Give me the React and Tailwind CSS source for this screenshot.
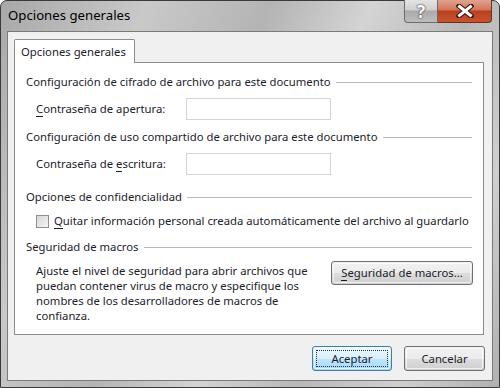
import React from "react";

const font = { fontFamily: '"Noto Sans", "DejaVu Sans", sans-serif' };

function Heading({ children }) {
  return (
    <div className="flex items-center h-[18px] pl-[11px] pr-[11px]">
      <span className="text-[#1c1c2c] whitespace-nowrap">{children}</span>
      <div className="flex-1 ml-[5px] h-px bg-[#b9b9b9] mt-px" />
    </div>
  );
}

function WinButton({ children, className = "", def = false }) {
  return (
    <div
      className={
        "relative flex items-center justify-center rounded-[3px] border " +
        (def ? "border-[#3c7fb1] " : "border-[#707070] ") +
        className
      }
      style={{
        background: def
          ? "linear-gradient(#eaf6fd 0%, #d9f0fc 50%, #bee6fd 50%, #a7d9f5 100%)"
          : "linear-gradient(#f2f2f2 0%, #ebebeb 50%, #dddddd 50%, #cfcfcf 100%)",
      }}
    >
      <div className="absolute inset-px rounded-[2px] border border-[#fcfcfc]/70" />
      {def && <div className="absolute inset-[3px] border border-dotted border-[#333]" />}
      <span className="relative text-[#1c1c2c]">{children}</span>
    </div>
  );
}

export default function App() {
  return (
    <div className="w-[500px] h-[388px] text-[11.3px] leading-none" style={font}>
      <div
        className="w-[500px] h-[388px] flex flex-col rounded-t-[7px] border border-[#3a3a3a] px-[6px] pb-[6px] relative"
        style={{
          background:
            "linear-gradient(115deg, #a8a8a8 0%, #c9c9c9 22%, #b4b4b4 40%, #d4d4d4 55%, #b8b8b8 70%, #cfcfcf 85%, #b0b0b0 100%)",
        }}
      >
        {/* title bar */}
        <div className="h-[30px] flex items-start">
          <span className="mt-[8px] ml-[1px] text-[13.2px] text-black whitespace-nowrap">
            Opciones generales
          </span>
          <div className="ml-auto flex mr-[1px] mt-[-1px]">
            <div
              className="w-[34px] h-[23px] rounded-bl-[4px] border border-[#6b6b6b] border-t-0 flex items-center justify-center text-white font-bold text-[17px]"
              style={{
                background: "linear-gradient(#e4e4e4 0%, #cfcfcf 45%, #ababab 50%, #bdbdbd 100%)",
                textShadow: "0 0 1px #333, 0 0 2px #333",
              }}
            >
              ?
            </div>
            <div
              className="w-[54px] h-[23px] rounded-br-[4px] border border-[#6b3020] border-t-0 border-l-0 flex items-center justify-center"
              style={{
                background: "linear-gradient(#e0a38f 0%, #d4755c 45%, #b8401f 50%, #c9532e 100%)",
              }}
            >
              <svg width="18" height="14" viewBox="0 0 18 14">
                <path d="M3 2 L15 12 M15 2 L3 12" stroke="#3a1208" strokeWidth="5" strokeLinecap="square" fill="none" />
                <path d="M3.5 2.5 L14.5 11.5 M14.5 2.5 L3.5 11.5" stroke="#ffffff" strokeWidth="3" strokeLinecap="square" fill="none" />
              </svg>
            </div>
          </div>
        </div>

        {/* client area */}
        <div className="flex-1 bg-[#f0f0f0] border border-[#7a7a7a] flex flex-col px-[6px] pt-[7px]">
          {/* tab */}
          <div className="flex">
            <div className="w-[121px] h-[24px] bg-white border border-b-0 border-[#898c95] flex items-center pl-[6px] relative z-10 -mb-px rounded-t-[2px]">
              <span className="text-[#1c1c2c] whitespace-nowrap">Opciones generales</span>
            </div>
          </div>
          <div className="w-[470px] h-[273px] bg-white border border-[#898c95] flex flex-col pt-[10px]">
            <Heading>Configuración de cifrado de archivo para este documento</Heading>
            <div className="flex items-center h-[22px] mt-[7px] pl-[21px]">
              <span className="w-[150px] text-[#1c1c2c] whitespace-nowrap">
                <span className="border-b border-[#1c1c2c]">C</span>ontraseña de apertura:
              </span>
              <div className="w-[145px] h-[22px] border border-[#d5d5d5] bg-white" />
            </div>
            <div className="h-[8px]" />
            <Heading>Configuración de uso compartido de archivo para este documento</Heading>
            <div className="flex items-center h-[22px] mt-[7px] pl-[21px]">
              <span className="w-[150px] text-[#1c1c2c] whitespace-nowrap">
                Contraseña de <span className="border-b border-[#1c1c2c]">e</span>scritura:
              </span>
              <div className="w-[145px] h-[22px] border border-[#d5d5d5] bg-white" />
            </div>
            <div className="h-[13px]" />
            <Heading>Opciones de confidencialidad</Heading>
            <div className="flex items-center h-[16px] mt-[7px] pl-[21px]">
              <div
                className="w-[13px] h-[13px] shrink-0 border border-[#8f8f8f]"
                style={{ background: "linear-gradient(135deg, #d6d6d6, #f6f6f6)" }}
              />
              <span className="ml-[5px] text-[#1c1c2c] whitespace-nowrap">
                <span className="border-b border-[#1c1c2c]">Q</span>uitar información personal creada automáticamente del archivo al guardarlo
              </span>
            </div>
            <div className="h-[9px]" />
            <Heading>Seguridad de macros</Heading>
            <div className="flex items-start mt-[7px] pl-[21px] pr-[10px]">
              <p className="w-[290px] text-[#1c1c2c] leading-[15px]">
                Ajuste el nivel de seguridad para abrir archivos que puedan contener virus de macro y especifique los nombres de los desarrolladores de macros de confianza.
              </p>
              <WinButton className="ml-auto -mt-[2px] w-[142px] h-[24px]">
                <span className="border-b border-[#1c1c2c]">S</span>eguridad de macros...
              </WinButton>
            </div>
          </div>
          {/* bottom buttons */}
          <div className="flex justify-end gap-[12px] mt-[11px] pr-[1px]">
            <WinButton def className="w-[80px] h-[25px]">Aceptar</WinButton>
            <WinButton className="w-[81px] h-[25px]">Cancelar</WinButton>
          </div>
        </div>
      </div>
    </div>
  );
}
